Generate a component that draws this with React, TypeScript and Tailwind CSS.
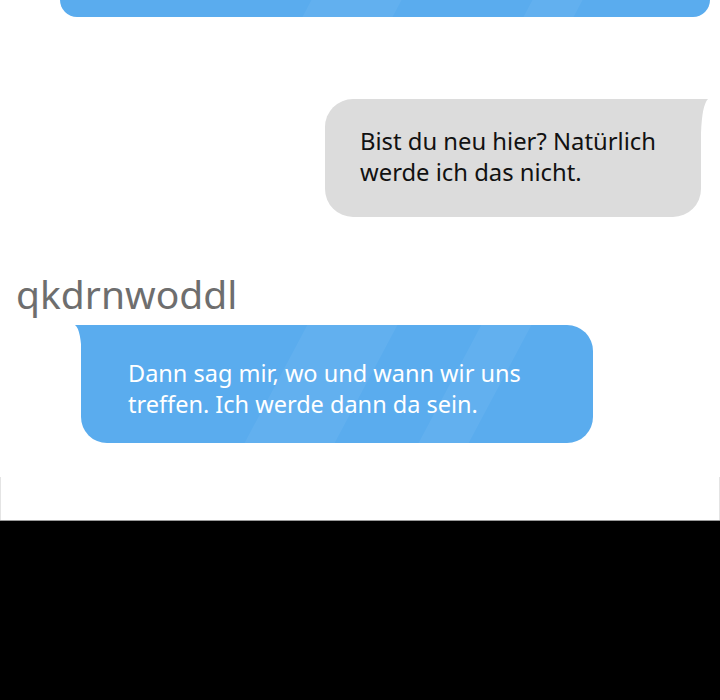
import React from 'react';

const font = { fontFamily: '"Noto Sans", "Open Sans", sans-serif' };

function Gloss() {
  // faint diagonal highlights seen across the bubbles
  return (
    <div className="pointer-events-none absolute inset-0 overflow-hidden rounded-[inherit]">
      <div className="absolute top-0 h-full w-[90px] left-[38%] -skew-x-[28deg] bg-white/5" />
      <div className="absolute top-0 h-full w-[50px] left-[72%] -skew-x-[28deg] bg-white/5" />
    </div>
  );
}

export default function App() {
  return (
    <div className="flex h-[700px] w-[720px] flex-col bg-black" style={font}>
      <div className="relative flex h-[521px] flex-col border-b border-[#9a9a9a] bg-white">
        {/* bubble cut off at the top */}
        <div className="relative ml-[60px] h-[17px] w-[650px] rounded-b-[24px] bg-[#5aacee]">
          <Gloss />
        </div>

        {/* incoming gray bubble */}
        <div className="mt-[82px] flex justify-end pr-[19px]">
          <div className="relative h-[118px] w-[376px] rounded-[28px] rounded-tr-none bg-[#dcdcdc] pl-[35px] pt-[27px]">
            <svg className="absolute -right-[7px] top-0" width="14" height="34" viewBox="0 0 14 34">
              <path d="M0 0 H14 Q8 6 7 34 H0 Z" fill="#dcdcdc" />
            </svg>
            <p className="text-[23.8px] leading-[31px] text-[#111]">
              Bist du neu hier? Natürlich
              <br />
              werde ich das nicht.
            </p>
          </div>
        </div>

        {/* sender name */}
        <p className="ml-[16px] mt-[55px] text-[39px] leading-[44px] text-[#6e6e6e]">qkdrnwoddl</p>

        {/* outgoing blue bubble */}
        <div className="ml-[81px] mt-[9px]">
          <div className="relative h-[118px] w-[512px] rounded-[26px] rounded-tl-none bg-[#5aacee] pl-[47px] pt-[33px]">
            <svg className="absolute -left-[6px] top-0" width="14" height="34" viewBox="0 0 14 34">
              <path d="M14 0 H0 Q6 4 7 34 H14 Z" fill="#5aacee" />
            </svg>
            <Gloss />
            <p className="relative text-[23.5px] leading-[31px] text-white">
              Dann sag mir, wo und wann wir uns
              <br />
              treffen. Ich werde dann da sein.
            </p>
          </div>
        </div>

        {/* faint panel edges near the bottom */}
        <div className="mt-auto flex h-[43px] justify-between">
          <div className="w-px bg-[#e4e4e4]" />
          <div className="w-px bg-[#e4e4e4]" />
        </div>
      </div>
    </div>
  );
}
